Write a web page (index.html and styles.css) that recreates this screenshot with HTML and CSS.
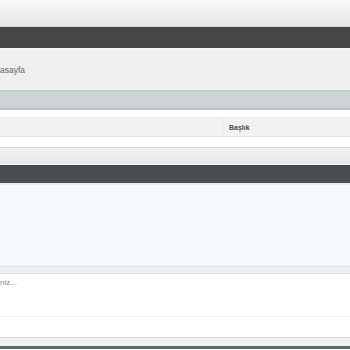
FILE: index.html
```html
<!DOCTYPE html>
<html lang="tr">
<head>
  <meta charset="UTF-8">
  <meta name="viewport" content="width=device-width, initial-scale=1.0">
  <title>Anasayfa</title>
  <link rel="stylesheet" href="styles.css">
</head>
<body>
  <div class="topbar"></div>
  <div class="menubar"></div>

  <div class="breadcrumb">
    <span class="crumb">asayfa</span>
  </div>

  <div class="section-head"></div>

  <div class="list">
    <div class="list-gap"></div>
    <div class="list-header">
      <div class="col-main"></div>
      <div class="col-title">Başlık</div>
    </div>
    <div class="list-row"></div>
  </div>

  <div class="list-foot"></div>

  <div class="panel">
    <div class="panel-head"></div>
    <div class="panel-body"></div>
  </div>

  <div class="divider"></div>

  <div class="reply">
    <div class="reply-box">niz...</div>
    <div class="reply-actions"></div>
  </div>

  <div class="footer"></div>
</body>
</html>
```

FILE: styles.css
```css
* {
  box-sizing: border-box;
}

body {
  margin: 0;
  font-family: "Liberation Sans", Arial, sans-serif;
  color: #555;
  background-color: #fff;
  overflow: hidden;
}

.topbar {
  height: 27px;
  background: linear-gradient(#f8f8f8, #e7e7e7);
  border-bottom: 1px solid #d6d6d6;
}

.menubar {
  height: 23px;
  background-color: #484644;
  border-bottom: 2px solid #f4f4f4;
}

.breadcrumb {
  height: 42px;
  display: flex;
  align-items: center;
  background-color: #efefef;
  border-bottom: 2px solid #c3c9cc;
}

.crumb {
  font-size: 8.5px;
  color: #666;
}

.section-head {
  height: 18px;
  background-color: #ccd4d7;
  border-bottom: 2px solid #bdc3c6;
}

.list-gap {
  height: 7px;
  background-color: #fff;
}

.list-header {
  height: 20px;
  display: flex;
  background-color: #f2f2f2;
  border-top: 1px solid #ececec;
  border-bottom: 1px solid #e0e0e0;
}

.col-main {
  flex: 0 0 223px;
  border-right: 1px solid #e6e6e6;
}

.col-title {
  flex: 1;
  padding-left: 6px;
  padding-top: 1px;
  display: flex;
  align-items: center;
  font-size: 7px;
  font-weight: bold;
  color: #4a4a4a;
}

.list-row {
  height: 11px;
  background-color: #fff;
  border-bottom: 1px solid #cfcfcf;
}

.list-foot {
  height: 17px;
  background: linear-gradient(#f0f0f0, #e9e9e9);
  border-bottom: 1px solid #fff;
}

.panel-head {
  height: 20px;
  background-color: #4a4d51;
  border-top: 1px solid #3d4044;
  border-bottom: 2px solid #e7ecef;
}

.panel-body {
  height: 81px;
  background-color: #f5f9fd;
}

.divider {
  height: 8px;
  background-color: #f0f0f0;
  border-top: 1px solid #e3e3e3;
  border-bottom: 1px solid #e3e3e3;
}

.reply-box {
  height: 43px;
  padding-top: 4px;
  font-size: 8px;
  color: #888;
  background-color: #fff;
  border-bottom: 1px solid #f3f3f3;
}

.reply-actions {
  height: 20px;
  background-color: #fff;
}

.footer {
  height: 12px;
  background-color: #efefef;
  border-top: 1px solid #d9d9d9;
  border-bottom: 3px solid #5d6b68;
}
```
